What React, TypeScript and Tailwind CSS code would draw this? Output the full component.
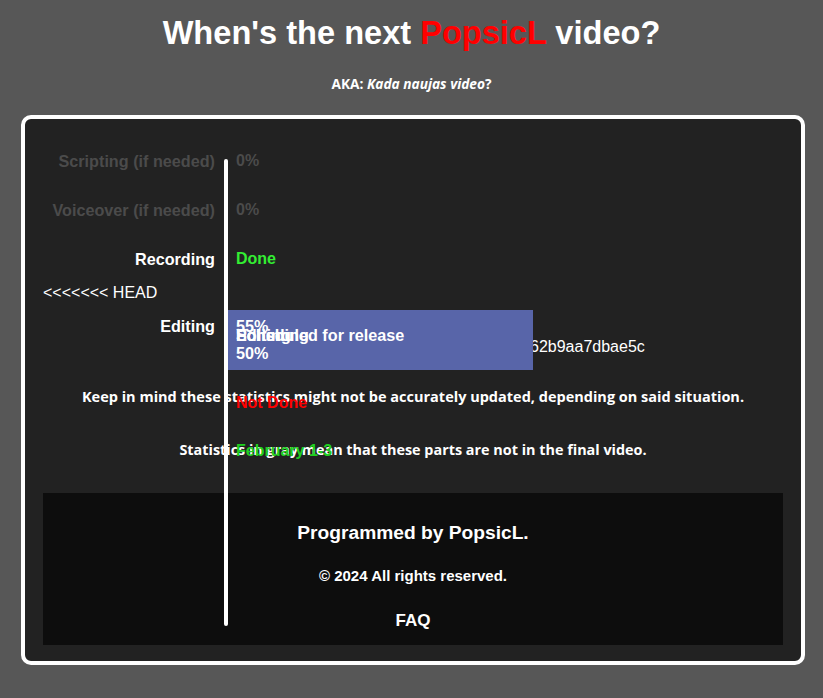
import React from "react";

const sans = "font-['Liberation_Sans',Arial,sans-serif]";
const open = "font-['Open_Sans','Noto_Sans',sans-serif]";

function Row({ label, value, labelCls, valueCls }: { label: string; value: string; labelCls: string; valueCls: string }) {
  return (
    <div className="flex h-[49px] items-center">
      <div className={`w-[190px] text-right text-[16.2px] font-bold leading-[18px] ${labelCls}`}>{label}</div>
      <div className={`pl-[21px] text-[16px] font-bold leading-[18px] ${valueCls}`}>{value}</div>
    </div>
  );
}

export default function App() {
  return (
    <div className={`min-h-screen bg-[#575757] ${sans} pb-[33px]`}>
      <h1 className="pt-[14px] text-center text-[32.6px] font-bold leading-[37px] text-white">
        When's the next <span className="text-[#ff0000]">PopsicL</span> video?
      </h1>
      <p className={`mt-[24px] text-center text-[13.7px] font-bold leading-[18px] text-white ${open}`}>
        AKA: <i>Kada naujas video</i>?
      </p>
      <div className="relative ml-[21px] mt-[22px] w-[784px] rounded-[10px] border-4 border-white bg-[#222222] pb-[16px] pt-[17px]">
        <Row label="Scripting (if needed)" value="0%" labelCls="text-[#4b4b4b]" valueCls="text-[#4b4b4b]" />
        <Row label="Voiceover (if needed)" value="0%" labelCls="text-[#4b4b4b]" valueCls="text-[#4b4b4b]" />
        <Row label="Recording" value="Done" labelCls="text-white" valueCls="text-[#33ee33]" />
        <div className="mt-[1px] pl-[18px] text-[16px] leading-[18px] text-white">&lt;&lt;&lt;&lt;&lt;&lt;&lt; HEAD</div>
        <div className="relative mt-[8px] flex h-[60px] items-start">
          <div className="mt-[7px] w-[190px] text-right text-[16.2px] font-bold leading-[18px] text-white">Editing</div>
          <div className="absolute left-[505px] top-[28px] text-[16px] leading-[18px] text-white">62b9aa7dbae5c</div>
          <div className="relative z-10 ml-[13px] h-[60px] w-[305px] bg-[#5865a9] text-[16.2px] font-bold leading-[18px] text-white">
            <div className="absolute left-[8px] top-[7px]">55%</div>
            <div className="absolute left-[8px] top-[16px]">Editing</div>
            <div className="absolute left-[8px] top-[16px]">Polishing</div>
            <div className="absolute left-[8px] top-[16px]">Scheduled for release</div>
            <div className="absolute left-[8px] top-[34px]">50%</div>
          </div>
        </div>
        <p className={`mt-[17px] text-center text-[14.5px] font-bold leading-[19px] text-white ${open}`}>
          Keep in mind these statistics might not be accurately updated, depending on said situation.
        </p>
        <p className={`mt-[34px] text-center text-[14.4px] font-bold leading-[19px] text-white ${open}`}>
          Statistics in gray mean that these parts are not in the final video.
        </p>
        <div className="mx-[18px] mt-[34px] flex h-[152px] flex-col items-center bg-[#0d0d0d] text-white">
          <div className="mt-[29px] text-[19.2px] font-bold leading-[22px]">Programmed by PopsicL.</div>
          <div className="mt-[23px] text-[15px] font-bold leading-[17px]">© 2024 All rights reserved.</div>
          <div className="mt-[27px] text-[17px] font-bold leading-[19px]">FAQ</div>
        </div>
        <div className="absolute left-[211px] top-[275px] z-20 text-[16px] font-bold leading-[18px] text-[#ff0000]">Not Done</div>
        <div className="absolute left-[211px] top-[323px] z-20 text-[16px] font-bold leading-[18px] text-[#1fcf1f]">February 1-3</div>
        <div className="absolute left-[199px] top-[40px] z-30 h-[467px] w-[4px] rounded-full bg-white"></div>
      </div>
    </div>
  );
}
